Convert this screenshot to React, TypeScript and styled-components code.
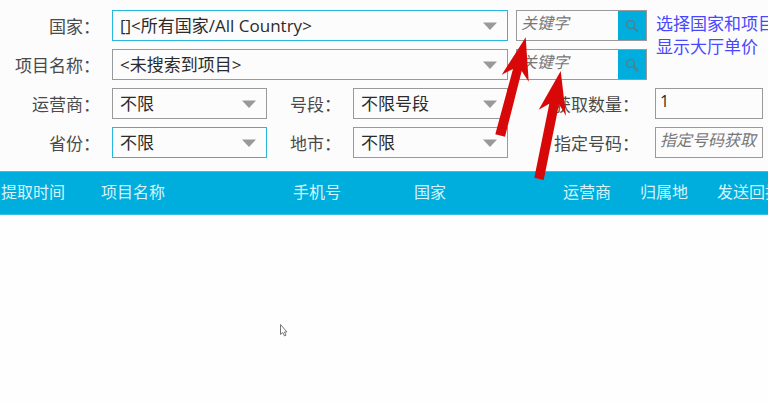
import React, { useId } from "react";
import styled, { createGlobalStyle } from "styled-components";

const GlobalStyle = createGlobalStyle`
  * { box-sizing: border-box; }
  html, body { margin: 0; background: #fefefe; }
  body, input, select, button {
    font-family: "Open Sans", "Noto Sans CJK SC", sans-serif;
  }
`;

const accent = "#00aedd";

const Page = styled.main`
  position: relative;
  min-height: 100vh;
  overflow: hidden;
  color: #4a4a4a;
`;

const FilterForm = styled.form`
  display: grid;
  grid-template-columns: 104px minmax(0, 1fr) 70px minmax(0, 1fr) 131px 108px;
  grid-auto-rows: 31px;
  gap: 8px;
  padding: 10px 5px 13px 0;
  background: #fcfcfc;
  font-size: 17px;
`;

const Label = styled.label<{ $end?: number }>`
  display: flex;
  align-items: center;
  justify-content: flex-end;
  padding-right: ${(p) => p.$end ?? 4}px;
  white-space: nowrap;
`;

const SelectBox = styled.div<{ $wide?: boolean }>`
  position: relative;
  grid-column: span ${(p) => (p.$wide ? 3 : 1)};
`;

const SelectControl = styled.select<{ $active?: boolean }>`
  appearance: none;
  display: block;
  width: 100%;
  height: 31px;
  padding: 0 28px 0 7px;
  border: 1px solid ${(p) => (p.$active ? "#28b8df" : "#999")};
  border-radius: 0;
  background: #fcfcfc;
  color: #2b2b2b;
  font-size: 17px;
`;

const Caret = styled.svg`
  position: absolute;
  top: 12px;
  right: 11px;
  width: 14px;
  height: 8px;
  pointer-events: none;
`;

const TextInput = styled.input`
  width: 100%;
  min-width: 0;
  height: 31px;
  padding: 0 4px 6px;
  border: 1px solid #999;
  border-radius: 0;
  background: #fcfcfc;
  color: #2b2b2b;
  font-size: 16px;
  &::placeholder {
    color: #777;
    opacity: 1;
    font-style: italic;
  }
`;

const SearchBox = styled.div`
  display: flex;
  border: 1px solid #999;
`;

const SearchInput = styled(TextInput)`
  height: 29px;
  flex: 1;
  border: 0;
`;

const SearchButton = styled.button`
  display: grid;
  place-items: center;
  width: 28px;
  padding: 0;
  border: 0;
  background: ${accent};
`;

const Note = styled.p`
  grid-row: span 2;
  margin: 2px 0 0 1px;
  color: #4a48ff;
  line-height: 23px;
  white-space: nowrap;
`;

const Table = styled.table`
  width: 100%;
  table-layout: fixed;
  border-collapse: collapse;
`;

const HeadCell = styled.th<{ $width?: number }>`
  width: ${(p) => (p.$width ? `${p.$width}px` : "auto")};
  height: 43px;
  padding: 0 0 4px 1px;
  border: solid #35c0e6;
  border-width: 1px 0;
  background: ${accent};
  color: #d8f3fb;
  font-size: 16px;
  font-weight: 400;
  text-align: left;
  white-space: nowrap;
`;

const Overlay = styled.svg`
  position: absolute;
  top: 0;
  left: 0;
  width: 768px;
  height: 405px;
  pointer-events: none;
`;

type SelectProps = { label: string; value: string; wide?: boolean; active?: boolean };

function SelectField({ label, value, wide, active }: SelectProps) {
  const id = useId();
  return (
    <>
      <Label htmlFor={id}>{label}：</Label>
      <SelectBox $wide={wide}>
        <SelectControl id={id} $active={active}>
          <option>{value}</option>
        </SelectControl>
        <Caret viewBox="0 0 14 8" aria-hidden="true">
          <path d="M0 0.5H14L7 8Z" fill="#999" />
        </Caret>
      </SelectBox>
    </>
  );
}

function KeywordSearch({ label }: { label: string }) {
  return (
    <SearchBox>
      <SearchInput type="text" placeholder="关键字" aria-label={label} />
      <SearchButton type="button" aria-label={label}>
        <svg width="14" height="14" viewBox="0 0 14 14" fill="none" stroke="#4d8090" aria-hidden="true">
          <circle cx="5.5" cy="5.5" r="4" strokeWidth="1.5" />
          <path d="M8.5 8.5L13 13" strokeWidth="1.8" />
        </svg>
      </SearchButton>
    </SearchBox>
  );
}

const columns = [
  { title: "提取时间", width: 100 },
  { title: "项目名称", width: 192 },
  { title: "手机号", width: 121 },
  { title: "国家", width: 149 },
  { title: "运营商", width: 77 },
  { title: "归属地", width: 77 },
  { title: "发送回执" },
];

export default function App() {
  return (
    <Page>
      <GlobalStyle />
      <FilterForm>
        <SelectField label="国家" value="[]<所有国家/All Country>" wide active />
        <KeywordSearch label="搜索国家" />
        <Note>
          选择国家和项目
          <br />
          显示大厅单价
        </Note>
        <SelectField label="项目名称" value="<未搜索到项目>" wide />
        <KeywordSearch label="搜索项目" />

        <SelectField label="运营商" value="不限" />
        <SelectField label="号段" value="不限号段" />
        <Label htmlFor="amount" $end={8}>获取数量：</Label>
        <TextInput id="amount" type="text" defaultValue="1" />

        <SelectField label="省份" value="不限" active />
        <SelectField label="地市" value="不限" />
        <Label htmlFor="number" $end={8}>指定号码：</Label>
        <TextInput id="number" type="text" placeholder="指定号码获取" />
      </FilterForm>
      <Table>
        <thead>
          <tr>
            {columns.map((c) => (
              <HeadCell key={c.title} $width={c.width} scope="col">{c.title}</HeadCell>
            ))}
          </tr>
        </thead>
      </Table>
      <Overlay viewBox="0 0 768 405" aria-hidden="true">
        <g fill="#d90808">
          <path d="M525.7 37.3L501.7 74.7L513 69L495.3 134.3L505 136.7L521.7 71L528.7 81.7Z" />
          <path d="M560.7 71L538.7 109.7L549.3 103.7L534.3 177.7L543.7 180L559 104.3L566 115.7Z" />
        </g>
        <path
          d="M280.5 324.5V334.5L282.8 332.5L284.5 336L286 335.2L284.5 332H287Z"
          fill="#fff"
          stroke="#777"
        />
      </Overlay>
    </Page>
  );
}
